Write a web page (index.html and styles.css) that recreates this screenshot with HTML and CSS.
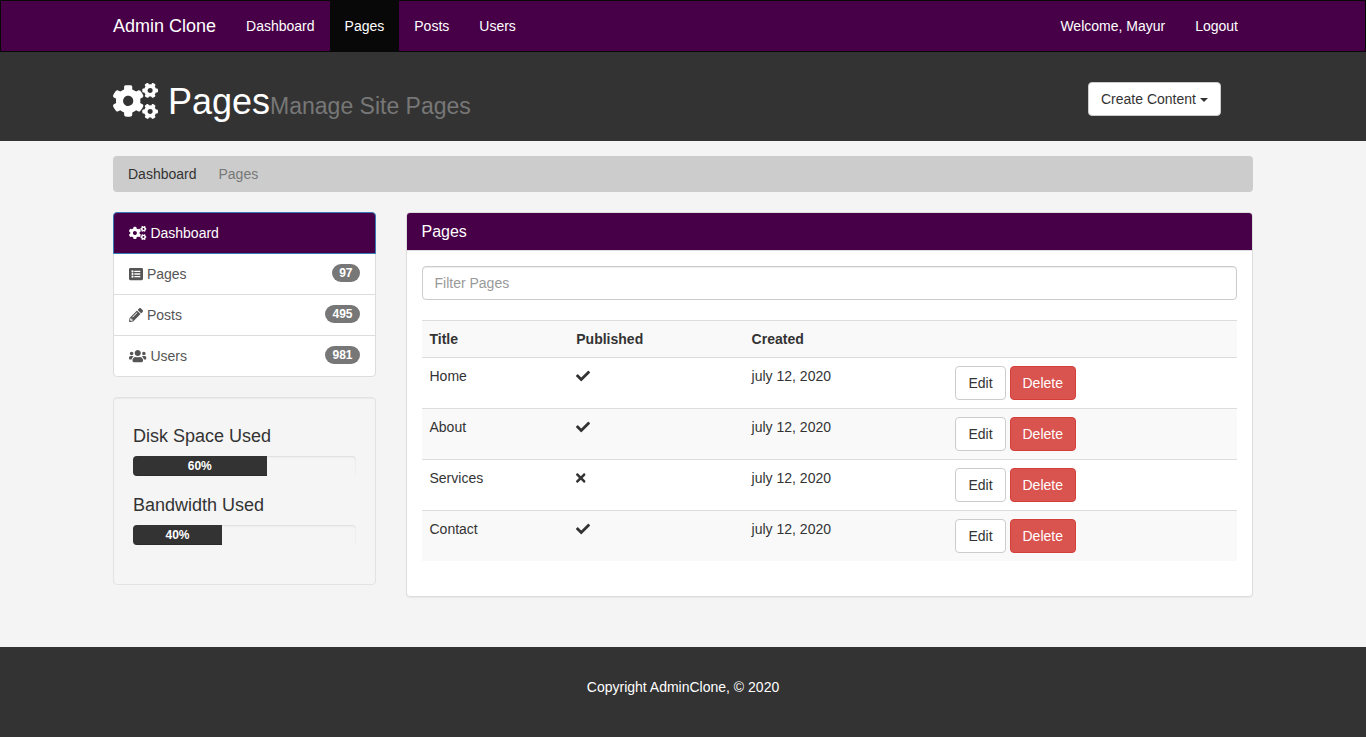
FILE: index.html
```html
<!DOCTYPE html>
<html lang="en">
<head>
<meta charset="utf-8">
<meta name="viewport" content="width=device-width, initial-scale=1">
<title>Admin Clone | Pages</title>
<link rel="stylesheet" href="styles.css">
</head>
<body>
<svg class="sprite" aria-hidden="true">
  <symbol id="cogs" viewBox="0 0 640 512">
    <path id="small-cog" d="M512.1 191l-8.2 14.3c-3 5.3-9.4 7.5-15.1 5.4-11.8-4.4-22.6-10.7-32.1-18.6-4.6-3.8-5.8-10.5-2.8-15.7l8.2-14.3c-6.9-8-12.3-17.3-15.9-27.4h-16.5c-6 0-11.2-4.3-12.2-10.3-2-12-2.1-24.6 0-37.1 1-6 6.2-10.4 12.2-10.4h16.5c3.6-10.1 9-19.4 15.9-27.4l-8.2-14.3c-3-5.2-1.9-11.9 2.8-15.7 9.5-7.9 20.4-14.2 32.1-18.6 5.7-2.1 12.1.1 15.1 5.4l8.2 14.3c10.5-1.9 21.2-1.9 31.7 0L552 6.3c3-5.3 9.4-7.5 15.1-5.4 11.8 4.4 22.6 10.7 32.1 18.6 4.6 3.8 5.8 10.5 2.8 15.7l-8.2 14.3c6.9 8 12.3 17.3 15.9 27.4h16.5c6 0 11.2 4.3 12.2 10.3 2 12 2.1 24.6 0 37.1-1 6-6.2 10.4-12.2 10.4h-16.5c-3.6 10.1-9 19.4-15.9 27.4l8.2 14.3c3 5.2 1.9 11.9-2.8 15.7-9.5 7.9-20.4 14.2-32.1 18.6-5.7 2.1-12.1-.1-15.1-5.4l-8.2-14.3c-10.4 1.9-21.2 1.9-31.7 0zm-10.5-58.8c38.5 29.6 82.4-14.3 52.8-52.8-38.5-29.7-82.4 14.3-52.8 52.8z"/>
    <use href="#small-cog" y="299"/>
    <path d="M386.3 286.1l33.7 16.8c10.1 5.8 14.5 18.1 10.5 29.1-8.9 24.2-26.4 46.4-42.6 65.8-7.4 8.9-20.2 11.1-30.3 5.3l-29.1-16.8c-16 13.7-34.6 24.6-54.9 31.7v33.6c0 11.6-8.3 21.6-19.7 23.6-24.6 4.2-50.4 4.4-75.9 0-11.5-2-20-11.9-20-23.6V418c-20.3-7.2-38.9-18-54.9-31.7L74 403c-10 5.8-22.9 3.6-30.3-5.3-16.2-19.4-33.3-41.6-42.2-65.7-4-10.9.4-23.2 10.5-29.1l33.3-16.8c-3.9-20.9-3.9-42.4 0-63.4L12 205.8c-10.1-5.8-14.6-18.1-10.5-29 8.9-24.2 26-46.4 42.2-65.8 7.4-8.9 20.2-11.1 30.3-5.3l29.1 16.8c16-13.7 34.6-24.6 54.9-31.7V57.1c0-11.5 8.2-21.5 19.6-23.5 24.6-4.2 50.5-4.4 76-.1 11.5 2 20 11.9 20 23.6v33.6c20.3 7.2 38.9 18 54.9 31.7l29.1-16.8c10-5.8 22.9-3.6 30.3 5.3 16.2 19.4 33.2 41.6 42.1 65.8 4 10.9.1 23.2-10 29.1l-33.7 16.8c3.9 21 3.9 42.5 0 63.5zm-117.6 21.1c59.2-77-28.7-164.9-105.7-105.7-59.2 77 28.7 164.9 105.7 105.7z"/>
  </symbol>
  <symbol id="list" viewBox="0 0 512 512">
    <path fill-rule="evenodd" d="M464 480H48c-26.5 0-48-21.5-48-48V80c0-26.5 21.5-48 48-48h416c26.5 0 48 21.5 48 48v352c0 26.5-21.5 48-48 48zM128 120a40 40 0 1 0 0 80 40 40 0 1 0 0-80zm0 96a40 40 0 1 0 0 80 40 40 0 1 0 0-80zm0 96a40 40 0 1 0 0 80 40 40 0 1 0 0-80zM204 136h200a12 12 0 0 1 12 12v24a12 12 0 0 1-12 12H204a12 12 0 0 1-12-12v-24a12 12 0 0 1 12-12zm0 96h200a12 12 0 0 1 12 12v24a12 12 0 0 1-12 12H204a12 12 0 0 1-12-12v-24a12 12 0 0 1 12-12zm0 96h200a12 12 0 0 1 12 12v24a12 12 0 0 1-12 12H204a12 12 0 0 1-12-12v-24a12 12 0 0 1 12-12z"/>
  </symbol>
  <symbol id="pencil" viewBox="0 0 512 512">
    <path d="M497.9 142.1l-46.1 46.1c-4.7 4.7-12.3 4.7-17 0l-111-111c-4.7-4.7-4.7-12.3 0-17l46.1-46.1c18.7-18.7 49.1-18.7 67.9 0l60.1 60.1c18.8 18.7 18.8 49.1 0 67.9zM284.2 99.8L21.6 362.4.4 483.9c-2.9 16.4 11.4 30.6 27.8 27.8l121.5-21.3 262.6-262.6c4.7-4.7 4.7-12.3 0-17l-111-111c-4.8-4.7-12.4-4.7-17.1 0zM124.1 339.9c-5.5-5.5-5.5-14.3 0-19.8l154-154c5.5-5.5 14.3-5.5 19.8 0s5.5 14.3 0 19.8l-154 154c-5.5 5.5-14.3 5.5-19.8 0zM88 424h48v36.3l-64.5 11.3-31.1-31.1L51.7 376H88v48z"/>
  </symbol>
  <symbol id="users" viewBox="0 0 640 512">
    <path d="M96 224c35.3 0 64-28.7 64-64s-28.7-64-64-64-64 28.7-64 64 28.7 64 64 64zm448 0c35.3 0 64-28.7 64-64s-28.7-64-64-64-64 28.7-64 64 28.7 64 64 64zm32 32h-64c-17.6 0-33.5 7.1-45.1 18.6 40.3 22.1 68.9 62 75.1 109.4h66c17.7 0 32-14.3 32-32v-32c0-35.3-28.7-64-64-64zm-256 0c61.9 0 112-50.1 112-112S381.9 32 320 32 208 82.1 208 144s50.1 112 112 112zm76.8 32h-8.3c-20.8 10-43.9 16-68.5 16s-47.6-6-68.5-16h-8.3C179.6 288 128 339.6 128 403.2V432c0 26.5 21.5 48 48 48h288c26.5 0 48-21.5 48-48v-28.8c0-63.6-51.6-115.2-115.2-115.2zm-223.7-13.4C161.5 263.1 145.6 256 128 256H64c-35.3 0-64 28.7-64 64v32c0 17.7 14.3 32 32 32h65.9c6.3-47.4 34.9-87.3 75.2-109.4z"/>
  </symbol>
  <symbol id="check" viewBox="0 0 512 512">
    <path d="M173.9 439.4l-166.4-166.4c-10-10-10-26.2 0-36.2l36.2-36.2c10-10 26.2-10 36.2 0L192 312.7 432.1 72.6c10-10 26.2-10 36.2 0l36.2 36.2c10 10 10 26.2 0 36.2l-294.4 294.4c-10 10-26.2 10-36.2 0z"/>
  </symbol>
  <symbol id="times" viewBox="0 0 352 512">
    <path d="M242.7 256l100.1-100.1c12.3-12.3 12.3-32.2 0-44.5l-22.2-22.2c-12.3-12.3-32.2-12.3-44.5 0L176 189.3 75.9 89.2c-12.3-12.3-32.2-12.3-44.5 0L9.2 111.4c-12.3 12.3-12.3 32.2 0 44.5L109.3 256 9.2 356.1c-12.3 12.3-12.3 32.2 0 44.5l22.2 22.2c12.3 12.3 32.2 12.3 44.5 0L176 322.7l100.1 100.1c12.3 12.3 32.2 12.3 44.5 0l22.2-22.2c12.3-12.3 12.3-32.2 0-44.5L242.7 256z"/>
  </symbol>
</svg>

<nav class="navbar">
  <div class="container navbar-inner">
    <a class="brand" href="#">Admin Clone</a>
    <ul class="nav">
      <li><a href="#">Dashboard</a></li>
      <li><a class="active" href="#" aria-current="page">Pages</a></li>
      <li><a href="#">Posts</a></li>
      <li><a href="#">Users</a></li>
    </ul>
    <ul class="nav nav-right">
      <li><a href="#">Welcome, Mayur</a></li>
      <li><a href="#">Logout</a></li>
    </ul>
  </div>
</nav>

<header class="page-header">
  <div class="container">
    <div class="row">
      <div class="col-title">
        <h1><svg class="icon icon-wide" aria-hidden="true"><use href="#cogs"/></svg> Pages<small>Manage Site Pages</small></h1>
      </div>
      <div class="col-create">
        <button class="btn" type="button">Create Content <span class="caret"></span></button>
      </div>
    </div>
  </div>
</header>

<div class="container">
  <ol class="breadcrumb">
    <li><a href="#">Dashboard</a></li>
    <li class="current">Pages</li>
  </ol>
</div>

<main class="container">
  <div class="row">
    <aside class="col-side">
      <nav class="list-group">
        <a class="list-item active" href="#"><span><svg class="icon icon-wide" aria-hidden="true"><use href="#cogs"/></svg> Dashboard</span></a>
        <a class="list-item" href="#"><span><svg class="icon" aria-hidden="true"><use href="#list"/></svg> Pages</span><span class="badge">97</span></a>
        <a class="list-item" href="#"><span><svg class="icon" aria-hidden="true"><use href="#pencil"/></svg> Posts</span><span class="badge">495</span></a>
        <a class="list-item" href="#"><span><svg class="icon icon-wide" aria-hidden="true"><use href="#users"/></svg> Users</span><span class="badge">981</span></a>
      </nav>
      <section class="well">
        <h4>Disk Space Used</h4>
        <div class="progress"><div class="progress-bar" style="width: 60%">60%</div></div>
        <h4>Bandwidth Used</h4>
        <div class="progress"><div class="progress-bar" style="width: 40%">40%</div></div>
      </section>
    </aside>

    <div class="col-main">
      <section class="panel">
        <div class="panel-heading"><h3>Pages</h3></div>
        <div class="panel-body">
          <input class="filter" type="text" placeholder="Filter Pages" aria-label="Filter Pages">
          <table class="table">
            <colgroup><col class="c-title"><col class="c-published"><col class="c-created"><col></colgroup>
            <tbody>
              <tr><th>Title</th><th>Published</th><th>Created</th><th></th></tr>
              <tr><td>Home</td><td><svg class="icon" role="img" aria-label="Yes"><use href="#check"/></svg></td><td>july 12, 2020</td><td><button class="btn" type="button">Edit</button> <button class="btn btn-danger" type="button">Delete</button></td></tr>
              <tr><td>About</td><td><svg class="icon" role="img" aria-label="Yes"><use href="#check"/></svg></td><td>july 12, 2020</td><td><button class="btn" type="button">Edit</button> <button class="btn btn-danger" type="button">Delete</button></td></tr>
              <tr><td>Services</td><td><svg class="icon icon-narrow" role="img" aria-label="No"><use href="#times"/></svg></td><td>july 12, 2020</td><td><button class="btn" type="button">Edit</button> <button class="btn btn-danger" type="button">Delete</button></td></tr>
              <tr><td>Contact</td><td><svg class="icon" role="img" aria-label="Yes"><use href="#check"/></svg></td><td>july 12, 2020</td><td><button class="btn" type="button">Edit</button> <button class="btn btn-danger" type="button">Delete</button></td></tr>
            </tbody>
          </table>
        </div>
      </section>
    </div>
  </div>
</main>

<footer class="footer">
  <p>Copyright AdminClone, © 2020</p>
</footer>
</body>
</html>
```

FILE: styles.css
```css
*,
*::before,
*::after {
  box-sizing: border-box;
}

body {
  margin: 0;
  background: #f4f4f4;
  color: #333;
  font-family: "Liberation Sans", Arial, sans-serif;
  font-size: 14px;
  line-height: 20px;
}

a {
  color: inherit;
  text-decoration: none;
}

ul,
ol {
  margin: 0;
  padding: 0;
  list-style: none;
}

h1,
h3,
h4 {
  margin: 0;
  font-weight: 500;
}

.sprite {
  display: none;
}

.icon {
  display: inline-block;
  width: 1em;
  height: 1em;
  fill: currentColor;
  vertical-align: -0.125em;
}

.icon-wide {
  width: 1.25em;
}

.icon-narrow {
  width: 0.6875em;
}

.container {
  max-width: 1170px;
  margin: 0 auto;
  padding: 0 15px;
}

.row {
  display: flex;
  flex-wrap: wrap;
  margin: 0 -15px;
}

/* Top navigation */
.navbar {
  border: 1px solid #080808;
  background: #470047;
  color: #fff;
}

.navbar-inner {
  display: flex;
  flex-wrap: wrap;
}

.brand {
  padding: 15px 15px 15px 0;
  font-size: 18px;
}

.nav {
  display: flex;
}

.nav-right {
  margin-left: auto;
}

.nav a {
  display: block;
  padding: 15px;
}

.nav a.active {
  background: #080808;
}

/* Page header */
.page-header {
  padding: 30px 0 19px;
  background: #333;
  color: #fff;
}

.col-title {
  width: 83.3333%;
  padding: 0 15px;
}

.col-create {
  width: 16.6666%;
  padding: 0 15px;
}

.page-header h1 {
  font-size: 36px;
  line-height: 40px;
}

.page-header small {
  color: #777;
  font-size: 23px;
  line-height: 1;
}

.btn {
  padding: 6px 12px;
  border: 1px solid #ccc;
  border-radius: 4px;
  background: #fff;
  color: #333;
  font: inherit;
  white-space: nowrap;
  vertical-align: middle;
  cursor: pointer;
}

.btn-danger {
  border-color: #d43f3a;
  background: #d9534f;
  color: #fff;
}

.caret {
  display: inline-block;
  border-top: 4px solid;
  border-right: 4px solid transparent;
  border-left: 4px solid transparent;
  vertical-align: middle;
}

.breadcrumb {
  display: flex;
  gap: 22px;
  margin: 15px 0 20px;
  padding: 8px 15px;
  border-radius: 4px;
  background: #ccc;
}

.breadcrumb .current {
  color: #777;
}

/* Sidebar */
.col-side {
  width: 25%;
  padding: 0 15px;
}

.col-main {
  width: 75%;
  padding: 0 15px;
}

.list-group {
  margin-bottom: 20px;
}

.list-item {
  display: flex;
  justify-content: space-between;
  align-items: flex-start;
  margin-top: -1px;
  padding: 10px 15px;
  border: 1px solid #ddd;
  background: #fff;
  color: #555;
}

.list-item:first-child {
  margin-top: 0;
  border-radius: 4px 4px 0 0;
}

.list-item:last-child {
  border-radius: 0 0 4px 4px;
}

.list-item.active {
  position: relative;
  z-index: 1;
  border-color: #337ab7;
  background: #470047;
  color: #fff;
}

.badge {
  padding: 3px 7px;
  border-radius: 10px;
  background: #777;
  color: #fff;
  font-size: 12px;
  font-weight: 700;
  line-height: 12px;
}

.well {
  padding: 19px;
  border: 1px solid #e3e3e3;
  border-radius: 4px;
  background: #f5f5f5;
  box-shadow: inset 0 1px 1px rgba(0, 0, 0, 0.05);
}

.well h4 {
  padding: 9px 0 10px;
  font-size: 18px;
}

.progress {
  height: 20px;
  margin-bottom: 10px;
  overflow: hidden;
  border-radius: 4px;
  background: #f5f5f5;
  box-shadow: inset 0 1px 2px rgba(0, 0, 0, 0.1);
}

.progress:last-child {
  margin-bottom: 20px;
}

.progress-bar {
  height: 100%;
  background: #333;
  box-shadow: inset 0 -1px 0 rgba(0, 0, 0, 0.15);
  color: #fff;
  font-size: 12px;
  font-weight: 700;
  text-align: center;
}

/* Main panel */
.panel {
  margin-bottom: 20px;
  border: 1px solid #ddd;
  border-radius: 4px;
  background: #fff;
  box-shadow: 0 1px 1px rgba(0, 0, 0, 0.05);
}

.panel-heading {
  padding: 10px 15px;
  border-bottom: 1px solid #ddd;
  border-radius: 3px 3px 0 0;
  background: #470047;
  color: #fff;
}

.panel-heading h3 {
  font-size: 16px;
  line-height: 17px;
}

.panel-body {
  padding: 15px;
}

.filter {
  display: block;
  width: 100%;
  height: 34px;
  margin-bottom: 20px;
  padding: 6px 12px;
  border: 1px solid #ccc;
  border-radius: 4px;
  background: #fff;
  box-shadow: inset 0 1px 1px rgba(0, 0, 0, 0.075);
  color: #555;
  font: inherit;
}

.filter::placeholder {
  color: #999;
  opacity: 1;
}

.table {
  width: 100%;
  margin-bottom: 20px;
  border-collapse: collapse;
  border-spacing: 0;
  table-layout: fixed;
}

.c-title {
  width: 18%;
}

.c-published {
  width: 21.5%;
}

.c-created {
  width: 25%;
}

.table th,
.table td {
  padding: 8px;
  border-top: 1px solid #ddd;
  text-align: left;
  vertical-align: top;
}

.table tr:nth-child(odd) {
  background: #f9f9f9;
}

/* Footer */
.footer {
  margin-top: 30px;
  padding: 30px;
  background: #333;
  color: #fff;
  text-align: center;
}

.footer p {
  margin: 0 0 10px;
}
```
